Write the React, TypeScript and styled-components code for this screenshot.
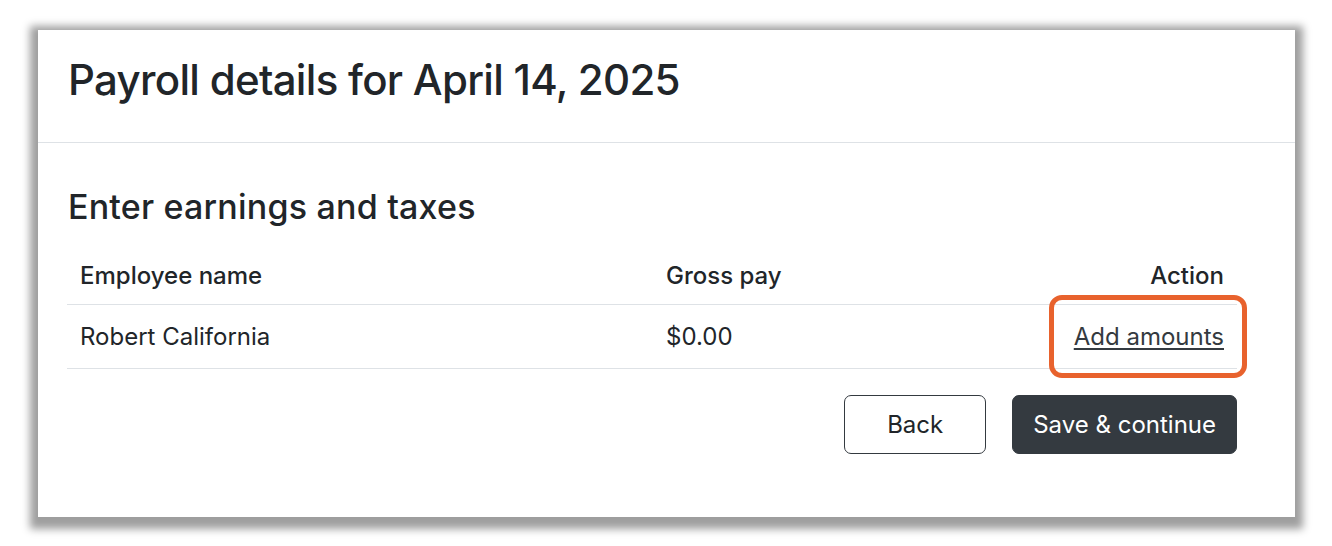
import React from 'react'
import styled, { createGlobalStyle } from 'styled-components'

const GlobalStyle = createGlobalStyle`
  body {
    margin: 0;
    background: #ffffff;
    font-family: Inter, "Liberation Sans", Arial, sans-serif;
    color: #212529;
  }
`

const Page = styled.div`
  padding: 30px 0 29px 38px;
`

const Card = styled.div`
  width: 1257px;
  height: 487px;
  background: #ffffff;
  box-shadow: 0 4px 8px 8px rgba(0, 0, 0, 0.38);
  display: flex;
  flex-direction: column;
`

const CardHeader = styled.div`
  height: 113px;
  box-sizing: border-box;
  display: flex;
  align-items: center;
  padding: 0 0 12px 30px;
  border-bottom: 1px solid #dee2e6;
`

const Title = styled.h1`
  margin: 0;
  font-size: 42px;
  font-weight: 500;
  line-height: 1.2;
  letter-spacing: -0.7px;
`

const CardBody = styled.div`
  padding: 44px 58px 0 29px;
`

const SectionTitle = styled.h2`
  margin: 0 0 20px 1px;
  font-size: 34px;
  font-weight: 500;
  line-height: 1.2;
  letter-spacing: 0.2px;
`

const Table = styled.table`
  width: 100%;
  border-collapse: collapse;
  font-size: 24px;
`

const Th = styled.th<{ $align?: 'left' | 'right' }>`
  text-align: ${p => p.$align ?? 'left'};
  font-weight: 500;
  padding: 11px 13px 12px;
  line-height: 33px;
  border-bottom: 1px solid #dee2e6;
`

const Td = styled.td<{ $align?: 'left' | 'right' }>`
  text-align: ${p => p.$align ?? 'left'};
  padding: 15px 13px;
  line-height: 33px;
  border-bottom: 1px solid #dee2e6;
`

const LinkWrap = styled.span`
  position: relative;
  display: inline-block;
`

const ActionLink = styled.a`
  color: #343a40;
  text-decoration: underline;
  text-underline-offset: 3px;
  cursor: pointer;
`

const Highlight = styled.span`
  position: absolute;
  left: -25px;
  right: -23px;
  top: -25px;
  bottom: -25px;
  border: 5px solid #e8622d;
  border-radius: 13px;
  pointer-events: none;
`

const Actions = styled.div`
  display: flex;
  justify-content: flex-end;
  gap: 26px;
  margin-top: 26px;
`

const Button = styled.button<{ $primary?: boolean }>`
  height: 59px;
  padding: 0 ${p => (p.$primary ? 20 : 42)}px;
  font-family: inherit;
  font-size: 24px;
  border-radius: 7px;
  border: 1px solid #343a40;
  background: ${p => (p.$primary ? '#343a40' : '#ffffff')};
  color: ${p => (p.$primary ? '#ffffff' : '#212529')};
  cursor: pointer;
`

export default function App() {
  return (
    <Page>
      <GlobalStyle />
      <Card>
        <CardHeader>
          <Title>Payroll details for April 14, 2025</Title>
        </CardHeader>
        <CardBody>
          <SectionTitle>Enter earnings and taxes</SectionTitle>
          <Table>
            <colgroup>
              <col style={{ width: 586 }} />
              <col />
              <col />
            </colgroup>
            <thead>
              <tr>
                <Th>Employee name</Th>
                <Th>Gross pay</Th>
                <Th $align="right">Action</Th>
              </tr>
            </thead>
            <tbody>
              <tr>
                <Td>Robert California</Td>
                <Td>$0.00</Td>
                <Td $align="right">
                  <LinkWrap>
                    <ActionLink>Add amounts</ActionLink>
                    <Highlight />
                  </LinkWrap>
                </Td>
              </tr>
            </tbody>
          </Table>
          <Actions>
            <Button>Back</Button>
            <Button $primary>Save &amp; continue</Button>
          </Actions>
        </CardBody>
      </Card>
    </Page>
  )
}
